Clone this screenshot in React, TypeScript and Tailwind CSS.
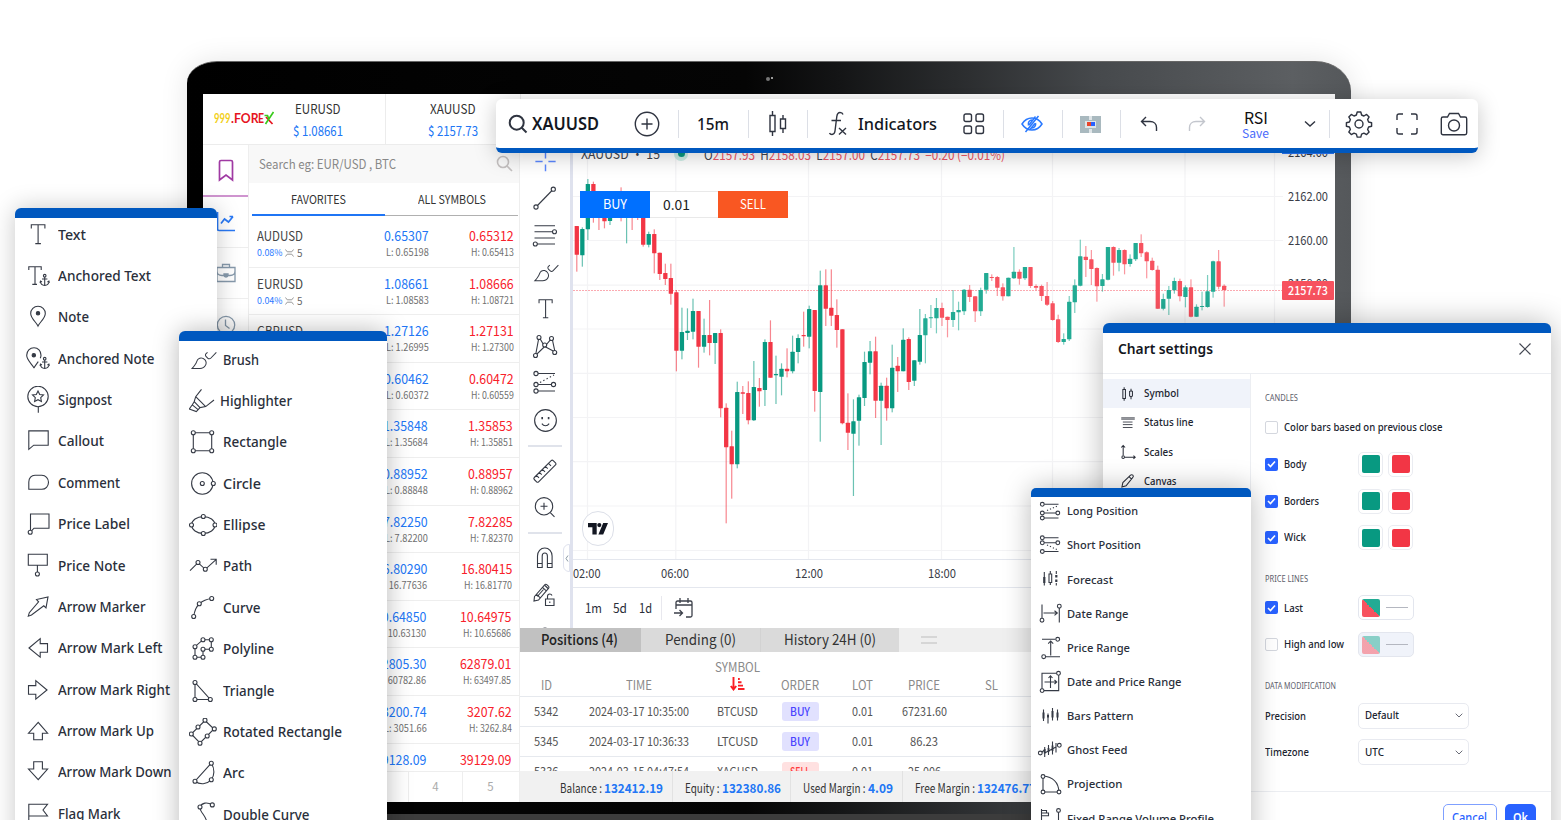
import React, { useLayoutEffect, useRef, useState } from "react";

/* ---------- text that condenses to a given width ---------- */
function Fit({ w, className = "", children }: { w: number; className?: string; children: React.ReactNode }) {
  const ref = useRef<HTMLSpanElement>(null);
  const [scale, setScale] = useState(1);
  useLayoutEffect(() => {
    if (ref.current && ref.current.offsetWidth) {
      const natural = ref.current.getBoundingClientRect().width / scale;
      setScale(w / natural);
    }
  }, [w]);
  return (
    <span className={"inline-flex shrink-0 justify-start leading-none " + className} style={{ width: w }}>
      <span ref={ref} className="inline-block shrink-0 origin-left whitespace-nowrap" style={{ transform: `scaleX(${scale})` }}>
        {children}
      </span>
    </span>
  );
}

/* ---------- icons ---------- */
type Pt = [number, number];
function Dots({ at, r = 2 }: { at: Pt[]; r?: number }) {
  return (
    <>
      {at.map(([x, y], i) => (
        <circle key={i} cx={x} cy={y} r={r} fill="white" />
      ))}
    </>
  );
}

const anchor = (
  <>
    <circle cx="20.7" cy="13.7" r="1.3" />
    <path d="M20.7 15v8.3M18 17h5.4M16.3 19.5c.4 2.6 2 3.8 4.4 3.9 2.400-.1 4-1.300 4.400-3.900M16 20.800l.5-1.700 1.500.8M25.400 20.800l-.5-1.700-1.500.8" />
  </>
);

const longLines = (
  <>
    <path d="M8 7.300H22.500M8 16h13M8 21h14.500" />
    <path d="M11 13.500L22.500 8.500" strokeDasharray="1.200 2" />
    <Dots at={[[6.3, 7.3], [6.3, 16], [21.8, 16], [6.3, 21]]} r={1.9} />
  </>
);

const icons: Record<string, React.ReactNode> = {
  text: <path d="M7.300 7.500V3.800h13.600v3.700M14.100 3.800v18.800M11.300 22.600h5.600" />,
  anchoredText: (
    <>
      <path d="M4.800 8V4.700h12.400V8M11 4.700v17.600M8.300 22.400H13" />
      {anchor}
    </>
  ),
  note: (
    <>
      <path d="M14 23c-1.500-3.600-7.300-7.600-7.300-12.500C6.700 6.300 9.900 3.300 14 3.300s7.300 3 7.300 7.200C21.300 15.400 15.500 19.400 14 23z" />
      <circle cx="14" cy="10.300" r="1.700" fill="currentColor" />
    </>
  ),
  anchoredNote: (
    <>
      <path d="M10 23c-1.500-3.600-7.300-7.600-7.300-12.700C2.700 6 5.900 2.800 10 2.800s7 3.200 7 7.500c0 1-.3 2-.7 3M10 23c.8-1.900 2.700-4.100 4.300-6.400" />
      <circle cx="9.800" cy="10.200" r="1.700" fill="currentColor" />
      {anchor}
    </>
  ),
  signpost: (
    <>
      <circle cx="14" cy="10.500" r="10.200" />
      <path d="M14.300 20.700v6M14 5l1.700 3.500 3.800.5-2.800 2.700.7 3.800L14 13.700l-3.400 1.800.7-3.800L8.500 9l3.800-.5z" />
    </>
  ),
  callout: <path d="M4.800 22.300V3.900h19.400v14.300H9.700z" />,
  comment: <path d="M4.800 20.300V13c0-4 2.600-6.700 6.200-6.700h6.800c3.800 0 6.700 3 6.700 7s-2.900 7-6.700 7z" />,
  priceLabel: (
    <>
      <path d="M6.500 20.500V4H25v14.200H10l-2.500 2.700" />
      <Dots at={[[6.2, 22.300]]} />
    </>
  ),
  priceNote: (
    <>
      <path d="M4.300 2.200h19v11h-19zM13.400 13.200v7" />
      <Dots at={[[13.4, 22]]} />
    </>
  ),
  arrowMarker: <path d="M4.300 23.200l1-3.500L14.600 8.800l-2.100-2.300L24 3.900l-2 11-2.200-2.100L7.500 22z" />,
  arrowLeft: <path d="M5 14L16.200 4.700v4.900h7.300v8.700h-7.300v4.900z" />,
  arrowRight: <path d="M23 14L11.800 4.700v4.900H4.500v8.700h7.300v4.900z" />,
  arrowUp: <path d="M14.200 5.300L4.500 16.200h5.200v6.600h8.700v-6.600h5.200z" />,
  arrowDown: <path d="M14.200 21.700L4.500 11h5.200V3.700h8.700V11h5.200z" />,
  flag: <path d="M4.800 28V4.300h18.700L19 10l4.500 6H4.800" />,
  brush: (
    <g fill="currentColor" stroke="none" fillRule="evenodd">
      <path d="M1.789 23l.859-.854.221-.228c.18-.19.38-.409.597-.655.619-.704 1.238-1.478 1.815-2.298.982-1.396 1.738-2.776 2.177-4.081 1.234-3.667 5.957-4.716 8.923-1.263 3.251 3.785-.037 9.380-5.379 9.380h-9.211zm9.211-1c4.544 0 7.272-4.642 4.621-7.728-2.450-2.853-6.225-2.015-7.216.931-.474 1.408-1.273 2.869-2.307 4.337-.599.852-1.241 1.653-1.882 2.383l-.068.078h6.853z" />
      <path d="M18.182 6.002l-1.419 1.286c-1.031.935-1.075 2.501-.096 3.480l1.877 1.877c.976.976 2.553.954 3.513-.045l5.650-5.874-.721-.693-5.650 5.874c-.574.596-1.507.609-2.086.031l-1.877-1.877c-.574-.574-.548-1.480.061-2.032l1.419-1.286-.672-.741z" />
    </g>
  ),
  highlighter: (
    <path d="M12.500 2.300L6.700 9.700 5.200 14.700 11 20.600l5.700-1L25 13M6.700 9.700l10 9.900M5.200 14.700L3.300 17.800.3 22l7 2.600L11 20.600M3.300 17.800l5.800 4.800" />
  ),
  rectangle: (
    <>
      <path d="M4.300 4.700h18.400v18H4.300z" />
      <Dots at={[[4.3, 4.700], [22.7, 4.700], [4.3, 22.7], [22.7, 22.7]]} />
    </>
  ),
  circle: (
    <>
      <circle cx="13.300" cy="13.500" r="10.700" />
      <Dots at={[[13.3, 13.5], [24.3, 13.5]]} />
    </>
  ),
  ellipse: (
    <>
      <ellipse cx="14.300" cy="14" rx="11.700" ry="8.400" />
      <Dots at={[[14.3, 5.5], [14.3, 22.5], [2.5, 14], [26, 14]]} />
    </>
  ),
  path: (
    <>
      <path d="M1 18.700l8-8 7.300 6.600L27 7.600M21.500 7.300h5.700v5.500" />
      <Dots at={[[9, 10.5], [16.3, 17.3]]} />
    </>
  ),
  curve: (
    <>
      <path d="M4.700 22.500c.8-6 2-9.500 5.600-12.700C14 6.500 18 5 22.700 4.500" />
      <Dots at={[[4.7, 22.5], [10.3, 9.8], [22.7, 4.5]]} />
    </>
  ),
  polyline: (
    <>
      <path d="M6 11.700l8-7h8.300v9.600H14v8H6z" />
      <Dots at={[[6, 11.7], [14, 4.7], [22.3, 4.7], [22.3, 14.3], [14, 14.3], [14, 22.3], [6, 22.3]]} />
    </>
  ),
  triangle: (
    <>
      <path d="M6 5.500v17h15.300z" />
      <Dots at={[[6, 5.5], [6, 22.5], [21.3, 22.5]]} />
    </>
  ),
  rotated: (
    <>
      <path d="M16 2.500l9 8.500L11 25 2.200 16z" />
      <Dots at={[[16, 2.2], [25.3, 10.9], [11, 25.3], [2.3, 16], [9, 9], [18.2, 18]]} />
    </>
  ),
  arc: (
    <>
      <path d="M22.300 4.200L6 22.200c5 3.800 11.500 3.300 16.300-1.400 3.200-4.300 3.700-11 0-16.600z" />
      <Dots at={[[22.3, 4.2], [6, 22.2], [22.3, 20.8]]} />
    </>
  ),
  doubleCurve: (
    <>
      <path d="M23.300 3.700C18 1 13 1.500 11 6c-1 4 6 9 6.500 14 .2 3-1 5-3 7" />
      <Dots at={[[23.3, 3.9], [11, 6]]} />
    </>
  ),
  long: longLines,
  short: (
    <>
      <path d="M8 6.800h14.500M8 11.800h13M8 20.500h14.500" />
      <path d="M11 14l11 5" strokeDasharray="1.200 2" />
      <Dots at={[[6.3, 6.8], [6.3, 11.8], [21.8, 11.8], [6.3, 20.5]]} r={1.9} />
    </>
  ),
  forecast: (
    <>
      <path d="M8.300 7v13.500M14.300 6v3M14.300 17.500V20M20.300 6v3M20.300 18v2.500" />
      <path d="M8.300 12v6" strokeWidth="2.200" />
      <path d="M13 9h2.700v8.500H13z" fill="white" />
      <path d="M20.300 10v2.500M20.300 14.500v2.500" strokeWidth="2.200" />
    </>
  ),
  dateRange: (
    <>
      <path d="M6 5.500v13.500M23.300 9v14.500M7.500 14H21M18.500 11.700L21.300 14l-2.800 2.300" />
      <Dots at={[[6, 21.2], [23.3, 7.2]]} r={1.9} />
    </>
  ),
  priceRange: (
    <>
      <path d="M6 5.300h13.500M9.500 22.700H24M14.700 21.500V7M12.200 9.700L14.700 7l2.500 2.700" />
      <Dots at={[[21.7, 5.3], [7.7, 22.7]]} r={1.900} />
    </>
  ),
  datePrice: (
    <>
      <path d="M6 5.300h16.700v17.300H6zM14.500 20V8M12.500 10l2-2.200 2 2.200M8.500 14h12M18.500 12l2.200 2-2.200 2" />
      <Dots at={[[22.5, 5.3], [6.1, 22.600]]} r={1.900} />
    </>
  ),
  bars: (
    <>
      <path d="M7.500 7.500v11.500M12 11.500v10M16.500 6v12.500M21.500 7.500v11" />
      <path d="M7.500 10.500v6M12 13v2.500M16.500 9v6.500M21.500 10.500v5" strokeWidth="2" />
    </>
  ),
  ghost: (
    <>
      <path d="M5.500 16.500l3-2.500M8.700 11v10M12.500 9v10M16.500 5.500v13M20 7v9.500M8.700 17l11.300-6" />
      <path d="M8.700 13v4.500M12.500 12v4M16.500 9.500v5.500" strokeWidth="1.800" />
      <Dots at={[[4.3, 17], [23.3, 9.300]]} r={1.900} />
    </>
  ),
  projection: (
    <>
      <path d="M7 6v16h16C22.500 12.500 17.500 7 7 6z" />
      <Dots at={[[7, 6.500], [7, 22], [23, 22]]} r={1.900} />
    </>
  ),
  volume: (
    <>
      <path d="M5.500 5v16M5.500 6.500h5v2.500h-5M5.500 9h7v2.800h-7M22.500 8v14" />
      <Dots at={[[22.5, 6.5]]} r={1.900} />
    </>
  ),
  trend: (
    <>
      <path d="M5.500 22.500l16.500-17" />
      <Dots at={[[5, 23], [22.3, 5.200]]} r={2.100} />
    </>
  ),
  fib: (
    <>
      <path d="M3.500 4.800h20.500M3.500 10.700h19M3.500 17h20.500M6 23h18" />
      <Dots at={[[23.5, 10.700], [4.300, 23]]} r={2} />
    </>
  ),
  pattern: (
    <>
      <path d="M4.500 23.500L8 5l5.700 9.500L21 6l3 14-10.300-5.500z" />
      <Dots at={[[4.5, 23.500], [8, 5.500], [13.700, 13], [20.500, 6.500], [23.700, 20.500]]} r={2} />
    </>
  ),
  longTool: (
    <>
      <path d="M6 4.500h18M6 15.500h16M6 22h18" />
      <path d="M9 13.500L23 6" strokeDasharray="1.400 2.300" />
      <Dots at={[[5, 4.500], [5, 15.500], [22.500, 15.500], [5, 22]]} r={2.100} />
    </>
  ),
  smile: (
    <>
      <circle cx="14" cy="14" r="10.500" />
      <path d="M10.800 10.700v2M17 10.700v2" strokeWidth="1.600" />
      <path d="M10.500 17c1.800 2.800 5.200 2.800 7 0" />
    </>
  ),
  ruler: (
    <path d="M3.300 20.500L20.200 3.600c.6-.6 1.400-.6 2 0l2.300 2.300c.6.600.6 1.400 0 2L7.600 24.800c-.6.6-1.400.6-2 0l-2.300-2.300c-.6-.6-.6-1.400 0-2zM17.500 6.400l2.500 2.500M14.500 9.400l2.200 2.200M11.500 12.400l2.500 2.500M8.500 15.400l2.200 2.200M5.500 18.400L8 20.900" />
  ),
  zoomIn: (
    <>
      <circle cx="13" cy="12.300" r="8.700" />
      <path d="M19.300 18.600L23.500 22.800M13 8.800v7M9.500 12.300h7" />
    </>
  ),
  magnet: (
    <path d="M6.500 23.500V12c0-4.500 3-8 7.300-8s7.300 3.500 7.300 8v11.500h-4.700V12c0-1.800-1-3-2.600-3s-2.600 1.200-2.600 3v11.500zM6.500 19.500h4.700M16.400 19.500h4.700" />
  ),
  pencilLock: (
    <>
      <path d="M3.500 15.500L13.700 3.800c.6-.7 1.500-.7 2.100-.1l1.600 1.500c.7.600.7 1.500.1 2.200L7.500 19l-4.500 1zM11.500 6.300l3.800 3.500M5.500 13.300l3.800 3.500M14 4.500l3 3M12.500 8.500l-6.200 7" />
      <path d="M14.500 18h8.500v6.500h-8.500zM16.500 18v-2.500c0-1.500 1-2.500 2.300-2.500 1 0 1.800.5 2.200 1.500M18.800 20.500v1.500" />
    </>
  ),
  lock: <path d="M11 16v-3c0-2 1.200-3 3-3s3 1 3 3v3z" />,
  cross: <path d="M14 4v7M14 17v7M3.500 14H11M17 14h7.500" strokeWidth="1.500" />,
  candles: (
    <path d="M6 7h4v14H6zM8 3.500V7M8 21v3.500M16.500 10l2.200-1 2.200 1v7l-2.200 1.500-2.200-1.500zM18.700 6v3M18.700 18.500V22" />
  ),
  statusLine: <path d="M3.500 6h21M3.500 8h21M6 12.500h15M6 16.500h15M6 21h15" strokeWidth="1.300" />,
  scales: (
    <>
      <path d="M6.500 4v15M3.500 7L6.500 4l3 3M8 22h17M22.500 19.500l2.700 2.500-2.700 2.500" />
      <Dots at={[[6.5, 22]]} r={2} />
    </>
  ),
  pencil: <path d="M4.500 23.500l1.500-7L18 5c1-1 2.500-1 3.500 0s1 2.500 0 3.500L11 21.500zM16 7.500l3.500 3.500" />,
};

function Icon({ name, size = 28, className = "" }: { name: string; size?: number; className?: string }) {
  return (
    <svg
      width={size}
      height={size}
      viewBox="0 0 28 28"
      fill="none"
      stroke="currentColor"
      strokeWidth="1.100"
      className={"shrink-0 " + (className || "text-[#353a45]")}
    >
      {icons[name]}
    </svg>
  );
}

/* ---------- candles: colour, open/close span, high/low span (thirds of a pixel from y=220) ---------- */
const candles: [0 | 1, number, number, number, number][] = [
  [0, 18, 104, 18, 155], [1, 27, 106, 22, 140], [1, -108, 28, -123, 60], [0, -108, -30, -115, 8], [0, -60, -12, -70, 30],
  [0, -40, 4, -50, 25], [1, -30, 3, -40, 15], [0, -50, -30, -60, -20], [0, -60, -30, -98, 4], [1, -60, -30, -70, 70],
  [0, -60, -20, -70, 30], [0, -50, -10, -60, 0], [0, -30, 74, -40, 80], [1, 42, 74, 35, 82], [0, 42, 100, 28, 160],
  [0, 98, 162, 98, 180], [0, 159, 177, 131, 195], [0, 174, 221, 131, 254], [0, 217, 392, 210, 454], [1, 336, 392, 263, 418],
  [1, 332, 339, 265, 360], [1, 273, 335, 236, 358], [0, 273, 380, 273, 443], [1, 345, 380, 296, 398], [0, 345, 369, 240, 406],
  [1, 339, 369, 339, 432], [0, 339, 565, 328, 592], [0, 563, 682, 550, 910], [0, 679, 733, 632, 836], [1, 516, 733, 485, 745],
  [0, 517, 521, 498, 582], [0, 519, 601, 484, 613], [1, 501, 601, 423, 603], [0, 504, 514, 474, 560], [1, 366, 510, 358, 558],
  [0, 366, 473, 301, 473], [1, 462, 466, 407, 552], [1, 446, 470, 430, 526], [0, 446, 454, 385, 472], [1, 395, 454, 347, 460],
  [1, 354, 396, 343, 430], [0, 345, 349, 275, 380], [1, 267, 350, 257, 385], [0, 270, 513, 270, 575], [1, 196, 516, 152, 665],
  [0, 196, 266, 148, 318], [0, 263, 287, 148, 318], [0, 285, 330, 238, 383], [0, 328, 610, 328, 613], [0, 608, 638, 520, 690],
  [1, 604, 641, 538, 828], [1, 532, 602, 524, 677], [1, 426, 534, 395, 558], [1, 394, 428, 363, 463], [0, 394, 542, 350, 594],
  [1, 497, 542, 488, 675], [0, 497, 565, 473, 602], [1, 443, 565, 374, 577], [0, 437, 454, 411, 516], [1, 359, 454, 325, 454],
  [0, 357, 486, 352, 510], [1, 421, 482, 421, 498], [1, 345, 425, 267, 434], [1, 295, 346, 282, 430], [1, 292, 295, 255, 324],
  [1, 264, 295, 234, 340], [0, 264, 293, 248, 318], [0, 290, 300, 290, 352], [1, 276, 300, 210, 321], [1, 270, 277, 245, 331],
  [1, 209, 274, 207, 285], [0, 209, 231, 195, 246], [0, 229, 274, 229, 306], [1, 210, 274, 203, 288], [1, 159, 209, 159, 221],
  [0, 171, 174, 163, 183], [0, 171, 203, 168, 228], [0, 202, 229, 190, 242], [1, 173, 229, 173, 229], [1, 155, 175, 81, 177],
  [0, 155, 176, 148, 194], [1, 141, 175, 141, 180], [0, 141, 198, 141, 204], [0, 198, 203, 193, 211], [0, 198, 228, 194, 243],
  [0, 228, 254, 186, 258], [0, 250, 300, 243, 302], [0, 298, 366, 284, 369], [1, 357, 366, 340, 374], [1, 245, 358, 228, 363],
  [1, 196, 247, 178, 279], [1, 109, 197, 59, 199], [0, 110, 120, 78, 171], [0, 118, 147, 90, 195], [0, 144, 199, 142, 245],
  [1, 178, 198, 162, 215], [1, 81, 179, 81, 181], [0, 81, 128, 79, 167], [1, 90, 128, 84, 154], [0, 90, 133, 88, 163],
  [1, 116, 132, 103, 140], [1, 69, 118, 69, 123], [0, 69, 100, 43, 111], [0, 97, 124, 94, 175], [0, 122, 150, 113, 152],
  [0, 149, 266, 137, 267], [1, 237, 266, 221, 271], [1, 210, 236, 198, 285], [1, 183, 211, 173, 221], [0, 183, 229, 176, 244],
  [1, 202, 231, 196, 262], [0, 202, 290, 178, 292], [1, 260, 290, 253, 291], [1, 258, 261, 215, 271], [1, 214, 261, 165, 263],
  [1, 124, 215, 122, 233], [0, 124, 200, 90, 208], [0, 197, 210, 193, 260],
];

function CandleChart() {
  return (
    <svg width="762" height="414" viewBox="573 145 762 414" className="block shrink-0">
      <g stroke="#f3f3f5" strokeWidth="1.200">
        {[196.5, 240.5, 285.2, 329, 373.3, 417.5, 461.7, 506, 550.5].map((y) => (
          <path key={y} d={`M573 ${y}H1283`} />
        ))}
        {[587.5, 675.8, 808.5, 941.5, 1052.5, 1185, 1274.5].map((x) => (
          <path key={x} d={`M${x} 145V559`} />
        ))}
      </g>
      <path d="M573 290.500H1283" stroke="#f7525f" strokeOpacity=".55" strokeDasharray="2 1" strokeWidth=".9" />
      {candles.map(([up, a, b, h, l], i) => {
        const x = 576.8 + i * 5.533;
        const late = i > 62;
        const c = up ? (late ? "#22ab94" : "#089981") : late ? "#f7525f" : "#f23645";
        return (
          <g key={i}>
            <rect x={x - 0.6} y={220 + h / 3} width={1.2} height={(l - h) / 3} fill={c} fillOpacity=".6" />
            <rect x={x - 2.15} y={220 + a / 3} width={4.3} height={Math.max(1, (b - a) / 3)} rx=".5" fill={c} />
          </g>
        );
      })}
    </svg>
  );
}

/* ---------- floating menus ---------- */
type Item = [string, string, number];
const leftMenu: Item[] = [
  ["text", "Text", 28], ["anchoredText", "Anchored Text", 93], ["note", "Note", 31], ["anchoredNote", "Anchored Note", 96.5],
  ["signpost", "Signpost", 54], ["callout", "Callout", 46], ["comment", "Comment", 62], ["priceLabel", "Price Label", 72],
  ["priceNote", "Price Note", 67.5], ["arrowMarker", "Arrow Marker", 87.5], ["arrowLeft", "Arrow Mark Left", 104.5],
  ["arrowRight", "Arrow Mark Right", 112], ["arrowUp", "Arrow Mark Up", 96], ["arrowDown", "Arrow Mark Down", 113.5], ["flag", "Flag Mark", 62.5],
];
const shapeMenu: Item[] = [
  ["brush", "Brush", 36], ["highlighter", "Highlighter", 72], ["rectangle", "Rectangle", 64], ["circle", "Circle", 38],
  ["ellipse", "Ellipse", 42.5], ["path", "Path", 29], ["curve", "Curve", 37.500], ["polyline", "Polyline", 51], ["triangle", "Triangle", 51.500],
  ["rotated", "Rotated Rectangle", 119], ["arc", "Arc", 21.500], ["doubleCurve", "Double Curve", 86.500],
];
const rangeMenu: Item[] = [
  ["long", "Long Position", 71], ["short", "Short Position", 74], ["forecast", "Forecast", 46], ["dateRange", "Date Range", 61.500],
  ["priceRange", "Price Range", 63], ["datePrice", "Date and Price Range", 114.500], ["bars", "Bars Pattern", 66.500], ["ghost", "Ghost Feed", 60.500],
  ["projection", "Projection", 55.500], ["volume", "Fixed Range Volume Profile", 147],
];

const TREB = "[font-family:'Noto_Sans','Open_Sans',sans-serif]";
const SRC = "[font-family:'Noto_Sans_CJK_SC','Noto_Sans',sans-serif]";

/* ---------- watch list ---------- */
const quotes: [string, string, string, string, string, string][] = [
  ["AUDUSD", "0.08%", "0.65307", "0.65198", "0.65312", "0.65413"],
  ["EURUSD", "0.04%", "1.08661", "1.08583", "1.08666", "1.08721"],
  ["GBPUSD", "", "1.27126", "1.26995", "1.27131", "1.27300"],
  ["", "", "0.60462", "0.60372", "0.60472", "0.60559"],
  ["", "", "1.35848", "1.35684", "1.35853", "1.35851"],
  ["", "", "0.88952", "0.88848", "0.88957", "0.88962"],
  ["", "", "7.82250", "7.82200", "7.82285", "7.82370"],
  ["", "", "16.80290", "16.77636", "16.80415", "16.81770"],
  ["", "", "10.64850", "10.63130", "10.64975", "10.65686"],
  ["", "", "62805.30", "60782.86", "62879.01", "63497.85"],
  ["", "", "3200.74", "3051.66", "3207.62", "3262.84"],
  ["", "", "39128.09", "", "39129.09", ""],
];
const priceW = (s: string) => s.replace(".", "").length * 6.85 + 3.5;
const subW = (s: string) => s.replace(".", "").length * 5.25 + 11.3;

function QuoteRow({ q, inset }: { q: (typeof quotes)[number]; inset: string }) {
  const [name, pct, bid, low, ask, high] = q;
  return (
    <div className={"flex h-[47.600px] shrink-0 border-b border-[#eeeeee] pl-[7.500px] " + inset}>
      <div className="flex w-[80px] flex-col pt-[9px]">
        {name && <Fit w={46} className="h-[15px] text-[13.500px] text-[#444]">{name}</Fit>}
        {pct && (
          <div className="mt-[4px] flex items-center gap-[3px]">
            <Fit w={25.500} className="text-[9.500px] text-[#2979ff]">{pct}</Fit>
            <svg width="9" height="8" viewBox="0 0 9 8" fill="none" stroke="#999"><path d="M.5 .5l1.700 2.300h4.600L8.500 .5M.5 7.500l1.700-2.300h4.600L8.500 7.500" /></svg>
            <Fit w={5.500} className="text-[10px] text-[#666]">5</Fit>
          </div>
        )}
      </div>
      <div className="flex flex-1 flex-col items-end pt-[9px]">
        <Fit w={priceW(bid)} className="h-[15px] text-[13.800px] text-[#2176f5]">{bid}</Fit>
        {low && <Fit w={subW(low)} className="mt-[3px] text-[10.300px] text-[#707070]">L: {low}</Fit>}
      </div>
      <div className="flex w-[85px] flex-col items-end pt-[9px]">
        <Fit w={priceW(ask)} className="h-[15px] text-[13.800px] text-[#f8202a]">{ask}</Fit>
        {high && <Fit w={subW(high)} className="mt-[3px] text-[10.300px] text-[#707070]">H: {high}</Fit>}
      </div>
    </div>
  );
}

function Ticker({ name, price, w }: { name: string; price: string; w: number }) {
  return (
    <div className="flex w-[135px] flex-col items-center border-r border-[#ececec] pt-[8px]">
      <Fit w={45.500} className="text-[13.500px] text-[#333]">{name}</Fit>
      <Fit w={w} className="mt-[8.500px] text-[13px] text-[#2176f5]">{price}</Fit>
    </div>
  );
}

function Watchlist() {
  return (
    <div className="flex w-[271px] shrink-0 flex-col overflow-hidden border-r border-[#eee] bg-white">
      <div className="flex h-[38px] shrink-0 items-center justify-between bg-[#f8f8f8] pb-[2px] pl-[10px] pr-[6px]">
        <Fit w={137} className="text-[13px] text-[#888]">Search eg: EUR/USD , BTC</Fit>
        <svg width="17" height="17" viewBox="0 0 17 17" fill="none" stroke="#c4c0c0" strokeWidth="1.600"><circle cx="7" cy="7" r="5.500" /><path d="M11 11l5 5" /></svg>
      </div>
      <div className="flex h-[33px] shrink-0 pl-[3px] pr-[1px]">
        <div className="flex w-[133px] items-center justify-center border-b-2 border-[#1f75f5] pt-px">
          <Fit w={55} className="text-[12px] text-[#333]">FAVORITES</Fit>
        </div>
        <div className="flex flex-1 items-center justify-center border-b border-[#b0b0b0]">
          <Fit w={68} className="text-[12px] text-[#333]">ALL SYMBOLS</Fit>
        </div>
      </div>
      <div className="flex min-h-0 flex-1 flex-col overflow-hidden pt-[4px]">
        {quotes.map((q, i) => (
          <QuoteRow key={i} q={q} inset={i < 4 ? "pr-[5.500px]" : i < 8 ? "pr-[6.500px]" : "pr-[7.500px]"} />
        ))}
      </div>
      <div className="flex h-[31px] shrink-0 items-center justify-end border-t border-[#eee] pr-[1px] text-[11.500px] leading-none text-[#aaa]">
        <div className="flex h-full w-[54px] items-center justify-center border-l border-[#eee]">4</div>
        <div className="flex h-full w-[56px] items-center justify-center border-l border-[#eee]">5</div>
      </div>
    </div>
  );
}

function SideNav() {
  return (
    <div className="flex w-[46px] shrink-0 flex-col items-center border-r border-[#eee] bg-white">
      <div className="flex h-[52px] w-full shrink-0 items-center justify-center border-b-2 border-[#cf94cf] pt-px">
        <svg width="16" height="23" viewBox="0 0 16 23" fill="none" stroke="#a03aa3" strokeWidth="1.700"><path d="M1.500 21V3c0-1 .6-1.500 1.500-1.500h10c.9 0 1.500.5 1.500 1.500v18L8 16z" /></svg>
      </div>
      <div className="flex h-[51px] w-full shrink-0 items-center justify-center border-b border-[#eee]">
        <svg width="20" height="20" viewBox="0 0 20 20" fill="none" stroke="#2979f5" strokeWidth="1.700"><path d="M1.500 0v17c0 1 .5 1.500 1.500 1.500h16M5 11.500l3.500-4.500 4 3L17 4.500M13.500 4.500h3.500" /></svg>
      </div>
      <div className="flex h-[51px] w-full shrink-0 items-center justify-center border-b border-[#eee]">
        <svg width="20" height="20" viewBox="0 0 20 20" fill="none" stroke="#8699ab" strokeWidth="1.300"><path d="M1 4.500h18v14H1zM6.500 4.500v-3h7v3M1 8c0 3 2 4.500 5 4.500h8c3 0 5-1.500 5-4.500M8 11h4v1.500c0 1-1 1.500-2 1.500s-2-.5-2-1.500z" /></svg>
      </div>
      <div className="flex h-[51px] w-full shrink-0 items-center justify-center">
        <svg width="20" height="20" viewBox="0 0 20 20" fill="none" stroke="#8699ab" strokeWidth="1.300"><circle cx="10" cy="10" r="8.700" /><path d="M9.500 4.500v6l4 3" /></svg>
      </div>
    </div>
  );
}

function DrawTools() {
  const group = (names: string[]) => names.map((n) => (
    <div key={n} className="flex h-[37px] w-full shrink-0 items-center justify-center">
      <Icon name={n} size={n === "text" || n === "brush" || n === "cross" ? 27 : n === "smile" ? 29 : 28} className={n === "cross" ? "text-[#5b88ff]" : ""} />
    </div>
  ));
  return (
    <div className="relative flex w-[53px] shrink-0 flex-col items-center overflow-hidden border-r-[3px] border-[#dfe2ee] bg-white">
      <div className="-mt-[2.500px] flex w-full flex-col">{group(["cross", "trend", "fib", "brush", "text", "pattern", "longTool", "smile"])}</div>
      <div className="mb-[6px] mt-[6px] h-[2px] w-[34px] shrink-0 bg-[#e0e3eb]" />
      {group(["ruler", "zoomIn"])}
      <div className="mb-[6px] mt-[5px] h-[2px] w-[34px] shrink-0 bg-[#e0e3eb]" />
      {group(["magnet", "pencilLock", "lock"])}
      <div className="absolute right-0 top-[399px] flex h-[28px] w-[7px] items-center justify-center rounded-l-md border border-[#dfe2ee] bg-white">
        <svg width="4" height="7" viewBox="0 0 4 7" fill="none" stroke="#8a9aa5"><path d="M3 .5l-2 3 2 3" /></svg>
      </div>
    </div>
  );
}

function Badge({ kind }: { kind: string }) {
  return (
    <span className={"flex h-[19px] w-[37px] items-center justify-center rounded-[3px] font-medium " + (kind === "BUY" ? "bg-[#e1e1fe] text-[#4a45ff]" : "bg-[#ffe1e1] text-[#ff3b3b]")}>
      <Fit w={20} className="text-[12px]">{kind}</Fit>
    </span>
  );
}

const COLS = "grid grid-cols-[53px_132px_64px_62px_62px_62px_72px] place-items-center";
function Positions() {
  const rows = [
    ["5342", "2024-03-17 10:35:00", "BTCUSD", "BUY", "0.01", "67231.60", 45],
    ["5345", "2024-03-17 10:36:33", "LTCUSD", "BUY", "0.01", "86.23", 28],
    ["5336", "2024-03-15 04:47:54", "XAGUSD", "SELL", "0.01", "25.006", 33],
  ] as const;
  return (
    <div className="flex h-[174px] shrink-0 flex-col overflow-hidden bg-white">
      <div className="flex h-[24px] shrink-0 items-center bg-[#efefef] text-[#333]">
        <div className="flex h-full w-[121px] items-center justify-center bg-[#c1c1c1] pb-[1px] pr-[2px] font-medium text-[#222]"><Fit w={77} className="text-[14.500px]">Positions (4)</Fit></div>
        <div className="flex h-full w-[120px] items-center justify-center border-r border-[#d2d2d2] bg-[#dadada] pb-[1px] pr-[1px]"><Fit w={71} className="text-[14.500px]">Pending (0)</Fit></div>
        <div className="flex h-full w-[138px] items-center justify-center bg-[#dadada] pb-[1px]"><Fit w={92} className="text-[14.500px]">History 24H (0)</Fit></div>
        <div className="ml-[22px] h-[8px] w-[16px] border-y-2 border-[#d6d6d6]" />
      </div>
      <div className={COLS + " h-[45px] shrink-0 border-b border-[#e6e9ee] text-[12.500px] text-[#8a8a8a]"}>
        <Fit w={11} className="mt-[22px]">ID</Fit>
        <Fit w={26} className="mt-[22px]">TIME</Fit>
        <div className="flex flex-col items-center gap-[3px] pt-[4px]">
          <Fit w={45}>SYMBOL</Fit>
          <svg width="15" height="14" viewBox="0 0 15 14" fill="none" stroke="#fa1e24" strokeWidth="1.900"><path d="M3.500 0v12M.8 9l2.700 3.500L6.200 9M8 2h1.800M8 5.300h3.500M8 8.600h5M8 12h6.500" /></svg>
        </div>
        <Fit w={38} className="mt-[22px]">ORDER</Fit>
        <Fit w={21} className="mt-[22px]">LOT</Fit>
        <Fit w={32} className="mt-[22px]">PRICE</Fit>
        <Fit w={13} className="mt-[22px]">SL</Fit>
      </div>
      <div className="flex min-h-0 flex-1 flex-col overflow-hidden text-[12px] text-[#555]">
        {rows.map((r) => (
          <div key={r[0]} className={COLS + " h-[30px] shrink-0 border-b border-[#e6e9ee] pb-[1px]"}>
            <Fit w={24.500} className="pb-px">{r[0]}</Fit>
            <Fit w={100} className="pb-px">{r[1]}</Fit>
            <Fit w={41} className="pb-px">{r[2]}</Fit>
            <Badge kind={r[3]} />
            <Fit w={21} className="pb-px">{r[4]}</Fit>
            <Fit w={r[6]} className="pb-px">{r[5]}</Fit>
            <span />
          </div>
        ))}
      </div>
      <div className="flex h-[31px] shrink-0 items-center bg-[#f1f1f1] pl-[40px] text-[12.500px] text-[#333]">
        <Fit w={42} className="pt-[4px]">Balance :</Fit>
        <Fit w={59} className="ml-[2px] pt-[4px] font-bold text-[#2176f5]">132412.19</Fit>
        <div className="ml-[9px] h-full w-px bg-[#e2e2e2]" />
        <Fit w={34.500} className="ml-[12px] pt-[4px]">Equity :</Fit>
        <Fit w={59} className="ml-[2px] pt-[4px] font-bold text-[#2176f5]">132380.86</Fit>
        <div className="ml-[9px] h-full w-px bg-[#e2e2e2]" />
        <Fit w={62.500} className="ml-[12.500px] pt-[4px]">Used Margin :</Fit>
        <Fit w={25} className="ml-[2px] pt-[4px] font-bold text-[#2176f5]">4.09</Fit>
        <div className="ml-[9px] h-full w-px bg-[#e2e2e2]" />
        <Fit w={60} className="ml-[12px] pt-[4px]">Free Margin :</Fit>
        <Fit w={59} className="ml-[2px] pt-[4px] font-bold text-[#2176f5]">132476.77</Fit>
      </div>
    </div>
  );
}

function ChartPane() {
  return (
    <div className="relative flex min-w-0 flex-1 flex-col bg-white">
      <CandleChart />
      <div className="flex h-[29px] shrink-0 items-center border-y border-[#e4e7ee] text-[12.500px] text-[#3a3d47]">
        <Fit w={27.500}>02:00</Fit>
        <Fit w={28} className="ml-[60.500px]">06:00</Fit>
        <Fit w={28} className="ml-[105.500px]">12:00</Fit>
        <Fit w={28} className="ml-[105px]">18:00</Fit>
      </div>
      <div className="flex flex-1 items-center pl-[12px] text-[13px] text-[#2a2e39]">
        <Fit w={17} className="pb-px">1m</Fit>
        <Fit w={14} className="ml-[11px] pb-px">5d</Fit>
        <Fit w={13} className="ml-[12px] pb-px">1d</Fit>
        <div className="ml-[9px] h-[24px] w-px bg-[#e8e8ee]" />
        <svg width="20" height="21" viewBox="0 0 20 21" fill="none" stroke="#3b3f49" strokeWidth="1.300" className="ml-[12px]"><path d="M2 11V4.500C2 3.500 2.600 3 3.500 3h13c.9 0 1.500.5 1.500 1.500v13c0 1-.6 1.500-1.500 1.500H12M2 7h16M6 0v5M14 0v5M0 15h8M5.500 12L8.500 15l-3 3" /></svg>
      </div>

      {/* legend, order ticket and axis labels laid over the plot */}
      <div className="absolute left-[8px] top-[1px] flex items-center text-[13.500px] text-[#42454f]">
        <Fit w={79}>XAUUSD · 15</Fit>
        <span className="ml-[14px] flex h-[14px] w-[14px] items-center justify-center rounded-full bg-[#cdeee6]"><span className="h-[7px] w-[7px] rounded-full bg-[#089981]" /></span>
        <Fit w={301} className="ml-[16px] pt-[2px] text-[13px] text-[#ef5565]">
          <span className="text-[#42454f]">O</span>2157.93&nbsp; <span className="text-[#42454f]">H</span>2158.03&nbsp; <span className="text-[#42454f]">L</span>2157.00&nbsp; <span className="text-[#42454f]">C</span>2157.73&nbsp; −0.20 (−0.01%)
        </Fit>
      </div>
      <div className="absolute left-[7px] top-[46px] flex h-[27px] w-[208px] border border-[#e9e9e9] bg-white">
        <div className="-m-px flex w-[70px] items-center justify-center bg-[#0070ff] pb-[2px] text-white"><Fit w={24} className="text-[13px]">BUY</Fit></div>
        <div className="flex flex-1 items-center pl-[14px] text-[#222]"><Fit w={27} className="text-[13px]">0.01</Fit></div>
        <div className="-m-px flex w-[70px] items-center justify-center bg-[#f95722] pb-[2px] text-white"><Fit w={26} className="text-[13px]">SELL</Fit></div>
      </div>
      <div className="absolute left-[9px] top-[366px] flex h-[35px] w-[32px] items-center justify-center rounded-full border border-[#dcdfe8] bg-white">
        <svg width="20" height="12" viewBox="0 0 20 12" fill="#131722"><path d="M0 0h8.700v11.500H4.400V4.300H0zM20 0l-4.800 11.500h-4.800L15.200 0z" /><circle cx="11.300" cy="2.100" r="2.100" /></svg>
      </div>
      <Fit w={40} className="absolute left-[715px] top-[1px] text-[12.500px] text-[#3a3d47]">2164.00</Fit>
      <div className="absolute left-[709px] top-[7px] h-[2px] w-[52px] bg-[#2979ff]" />
      <Fit w={40} className="absolute left-[715px] top-[45px] text-[12.500px] text-[#3a3d47]">2162.00</Fit>
      <Fit w={40} className="absolute left-[715px] top-[89px] text-[12.500px] text-[#3a3d47]">2160.00</Fit>
      <Fit w={40} className="absolute left-[715px] top-[132px] text-[12.500px] text-[#3a3d47]">2158.00</Fit>
      <div className="absolute left-[709px] top-[136px] flex h-[19px] w-[52px] items-center justify-center rounded-[1px] bg-[#f7525f] font-medium text-white"><Fit w={40} className="pb-px text-[12.500px]">2157.73</Fit></div>
    </div>
  );
}

function Laptop() {
  return (
    <div className={"absolute left-[187px] top-[61px] h-[790px] w-[1164px] rounded-tl-[30px_22px] rounded-tr-[36px_30px] border-t border-[#666] bg-[linear-gradient(90deg,#000_0%,#050505_48%,#141516_56%,#2a2c2e_66%,#46494c_78%,#5c5f62_95%,#55585b_100%)] pl-[16px] pr-[16px] pt-[32px] shadow-[0_0_28px_rgba(0,0,0,0.10)] " + SRC}>
      <div className="absolute left-[579px] top-[15px] flex gap-[1px]"><span className="h-[4px] w-[4px] rounded-full bg-[#777]" /><span className="h-[2px] w-[2px] rounded-full bg-[#ccc]" /></div>
      <div className="flex h-[708px] flex-col bg-white">
        <div className="flex h-[51px] shrink-0 border-b border-[#ececec]">
          <div className="flex w-[48px] items-center justify-start pl-[11px] [font-family:Lato,sans-serif]">
            <div className="flex shrink-0 items-center pt-[1px] text-[12.500px]">
              <Fit w={16.500} className="font-bold text-[#f2d01a]">999</Fit>
              <Fit w={27.500} className="font-bold text-[#e6141f]">.FOR</Fit>
              <Fit w={6} className="font-bold text-[#e6141f]">E</Fit>
              <svg width="10" height="14" viewBox="0 0 10 14" fill="none" strokeWidth="1.700" className="-mt-[3px]"><path d="M2 6l6.500 7" stroke="#e6141f" /><path d="M.5 4.500h3L5 8.500M1.500 13L9.500 1" stroke="#3acb1d" /></svg>
            </div>
          </div>
          <Ticker name="EURUSD" price="$ 1.08661" w={50} />
          <Ticker name="XAUUSD" price="$ 2157.73" w={50} />
        </div>
        <div className="flex min-h-0 flex-1">
          <SideNav />
          <Watchlist />
          <div className="flex min-w-0 flex-1 flex-col">
            <div className="flex min-h-0 flex-1">
              <DrawTools />
              <ChartPane />
            </div>
            <Positions />
          </div>
        </div>
      </div>
      <div className="-mx-[16px] mt-[12px] h-[10px] bg-[#3c3c3c]" />
    </div>
  );
}

function Sep({ className }: { className: string }) {
  return <div className={"h-[28px] w-px shrink-0 bg-[#dcdfe6] " + className} />;
}

function TopBar() {
  const s = { fill: "none", stroke: "#2f3440", strokeWidth: 1.4 };
  return (
    <div className={"absolute left-[496px] top-[99px] flex h-[54px] w-[982px] items-center rounded-[6px] border-b-[5px] border-[#0058bf] bg-white pl-[12px] text-[#131722] shadow-[0_3px_22px_rgba(0,0,0,0.22)] " + TREB}>
      <svg width="20" height="20" viewBox="0 0 20 20" {...s} strokeWidth={2} className="shrink-0"><circle cx="8.700" cy="8.700" r="7" /><path d="M13.500 13.500l5 5" /></svg>
      <Fit w={67} className="ml-[4px] text-[17.500px] font-semibold">XAUUSD</Fit>
      <svg width="26" height="26" viewBox="0 0 26 26" {...s} className="ml-[35px] mt-[1px] shrink-0"><circle cx="13" cy="13" r="11.700" /><path d="M13 7.500v11M7.500 13h11" /></svg>
      <Sep className="ml-[17.500px]" />
      <Fit w={32} className="ml-[18px] text-[17px] font-medium">15m</Fit>
      <Sep className="ml-[19px]" />
      <svg width="20" height="26" viewBox="0 0 20 26" {...s} className="ml-[19.500px] mt-px shrink-0"><path d="M2 4.500h5v16H2zM4.500 0v4.500M4.500 20.500V25M12.500 8h5v9.500h-5zM15 4v4M15 17.500V22" /></svg>
      <Sep className="ml-[18.500px]" />
      <svg width="20" height="26" viewBox="0 0 20 26" {...s} className="ml-[20px] shrink-0"><path d="M15 3.500C14.500 1.800 13.500 1.500 12 1.500c-2 0-2.800 1.500-3.200 4L7 20c-.3 2.300-1 3.500-3 3.500-1.200 0-2-.3-2.500-1.500M3.500 9.500h9.500M11 17l7 6.500M18 17l-7 6.500" /></svg>
      <Fit w={79} className="ml-[10.500px] text-[17px] font-medium">Indicators</Fit>
      <svg width="22" height="22" viewBox="0 0 22 22" {...s} className="ml-[26px] mt-px shrink-0"><rect x="1" y="1" width="7.500" height="7.500" rx="1.800" /><rect x="13" y="1" width="7.500" height="7.500" rx="1.800" /><rect x="1" y="13" width="7.500" height="7.500" rx="1.800" /><rect x="13" y="13" width="7.500" height="7.500" rx="1.800" /></svg>
      <Sep className="ml-[18px]" />
      <svg width="22" height="18" viewBox="0 0 22 18" fill="none" stroke="#2979ff" strokeWidth="1.500" className="ml-[17px] shrink-0"><path d="M1 9c2.500-4 5.800-6 10-6s7.500 2 10 6c-2.500 4-5.800 6-10 6S3.500 13 1 9z" /><path d="M7.500 10.500C6.500 7.500 8.500 5 11 5M14.500 8c.7 2.500-1 5-3.500 5M17.500 1L4.500 17M14.500 1.500L8 10M14 8.500l-5 6" /></svg>
      <Sep className="ml-[18.500px]" />
      <div className="ml-[17.500px] mt-px flex h-[17px] w-[21px] shrink-0 items-center justify-center bg-[#a9b9bf]">
        <span className="flex h-full w-[11px] flex-col items-center justify-between">
          <span className="h-[4px] w-[3px] bg-[#dfe5e8]" />
          <span className="flex h-[7px] w-[11px] items-center justify-center bg-[#dfe5e8]"><span className="h-[4px] w-[4px] bg-[#e8452c]" /><span className="h-[4px] w-[4px] bg-[#2962ff]" /></span>
          <span className="h-[4px] w-[3px] bg-[#dfe5e8]" />
        </span>
      </div>
      <Sep className="ml-[18.500px]" />
      <svg width="18" height="16" viewBox="0 0 18 16" {...s} className="ml-[19px] shrink-0"><path d="M6 1L1.500 5.500 6 10M1.500 5.500H10c4 0 6.500 2.500 6.500 6V15" /></svg>
      <svg width="18" height="16" viewBox="0 0 18 16" fill="none" stroke="#c3c6cd" strokeWidth="1.400" className="ml-[30px] shrink-0"><path d="M12 1l4.500 4.500L12 10M16.500 5.500H8c-4 0-6.500 2.500-6.500 6V15" /></svg>
      <div className={"ml-[35.500px] flex w-[29px] shrink-0 flex-col items-center pt-px " + SRC}>
        <Fit w={24} className="text-[16.500px] text-[#111]">RSI</Fit>
        <Fit w={27} className="mt-[2px] text-[12px] text-[#4a6bfa]">Save</Fit>
      </div>
      <svg width="12" height="8" viewBox="0 0 12 8" {...s} className="ml-[34px] mt-px shrink-0"><path d="M1 1.500l5 4.500 5-4.500" /></svg>
      <Sep className="ml-[13px]" />
      <svg width="28" height="28" viewBox="0 0 28 28" {...s} className="ml-[14.500px] mt-px shrink-0">
        <path d="M12.200 2h3.600l.8 3 2.300 1 2.700-1.600 2.500 2.500-1.500 2.700 1 2.400 3 .8v3.400l-3 .8-1 2.400 1.500 2.700-2.500 2.500-2.700-1.500-2.300 1-.8 3h-3.600l-.8-3-2.400-1-2.700 1.500-2.500-2.500 1.600-2.700-1-2.400-3-.8v-3.400l3-.8 1-2.400L3.800 6.900l2.500-2.500L9 6l2.400-1z" strokeLinejoin="round" />
        <circle cx="14" cy="14" r="4" />
      </svg>
      <svg width="22" height="22" viewBox="0 0 22 22" {...s} className="ml-[23.500px] mt-px shrink-0"><path d="M1 7V3c0-1.300.7-2 2-2h4M15 1h4c1.300 0 2 .7 2 2v4M21 15v4c0 1.300-.7 2-2 2h-4M7 21H3c-1.300 0-2-.7-2-2v-4" /></svg>
      <svg width="28" height="24" viewBox="0 0 28 24" {...s} className="ml-[22px] shrink-0"><path d="M3 5h4.500l2-3.500h9l2 3.500H25c1 0 1.700.7 1.700 1.700V21c0 1-.7 1.700-1.700 1.700H3c-1 0-1.700-.7-1.700-1.700V6.700C1.300 5.700 2 5 3 5z" /><circle cx="14" cy="13.500" r="5.500" /></svg>
    </div>
  );
}

function Check({ on }: { on?: boolean }) {
  return on ? (
    <span className="flex h-[13px] w-[13px] shrink-0 items-center justify-center rounded-[2px] bg-[#2962ff]">
      <svg width="9" height="8" viewBox="0 0 9 8" fill="none" stroke="white" strokeWidth="1.600"><path d="M1 4l2.500 2.500L8 1.500" /></svg>
    </span>
  ) : (
    <span className="h-[13px] w-[13px] shrink-0 rounded-[2px] border border-[#d4d7de] bg-white" />
  );
}

function Swatch({ className }: { className: string }) {
  return (
    <span className="flex h-[25px] w-[25px] shrink-0 items-center justify-center rounded-[5px] border border-[#eaecf1] bg-white">
      <span className={"h-[18px] w-[18px] rounded-[2px] " + className} />
    </span>
  );
}

function LineStyle({ faded }: { faded?: boolean }) {
  return (
    <span className={"flex h-[25px] w-[56px] shrink-0 items-center rounded-[5px] border border-[#e3e6ee] pl-[3px] " + (faded ? "bg-[#f0f3fa]" : "bg-white")}>
      <span className={"h-[18px] w-[18px] rounded-[2px] bg-[linear-gradient(45deg,#f7525f_50%,#22ab94_50%)] " + (faded ? "opacity-50" : "")} />
      <span className="ml-[6px] h-px w-[22px] bg-[#b4b7c0]" />
    </span>
  );
}

function Select({ children, w }: { children: string; w: number }) {
  return (
    <span className="flex h-[26px] w-[111px] shrink-0 items-center justify-between rounded-[5px] border border-[#e8eaf0] bg-white px-[5.500px]">
      <Fit w={w}>{children}</Fit>
      <svg width="8" height="5" viewBox="0 0 8 5" fill="none" stroke="#6a6d78"><path d="M.7.7L4 4 7.300.7" /></svg>
    </span>
  );
}

function Settings() {
  const nav: Item[] = [["candles", "Symbol", 35], ["statusLine", "Status line", 49.500], ["scales", "Scales", 29], ["pencil", "Canvas", 32.500]];
  return (
    <div className={"absolute left-[1103px] top-[323px] flex h-[540px] w-[447.500px] flex-col rounded-t-[6px] border-t-[10px] border-[#0058bf] bg-white text-[10.800px] font-medium text-[#20242f] shadow-[0_0_30px_rgba(0,0,0,0.28)] " + TREB}>
      <div className="flex h-[41px] shrink-0 items-center justify-between border-b border-[#eceef2] pb-[8px] pl-[15px] pr-[20px]">
        <Fit w={95} className="text-[14px] font-semibold text-[#131722]">Chart settings</Fit>
        <svg width="12" height="12" viewBox="0 0 12 12" fill="none" stroke="#444853" strokeWidth="1.200"><path d="M.5.5l11 11M11.500.5l-11 11" /></svg>
      </div>
      <div className="flex h-[418px] shrink-0 border-b border-[#eceef2]">
        <div className="flex w-[148px] shrink-0 flex-col border-r border-[#eceef2] pt-[5px]">
          {nav.map(([ic, label, w], i) => (
            <div key={label} className={"flex h-[29.200px] items-center pl-[16px] " + (i === 0 ? "bg-[#f0f3fa]" : "")}>
              <Icon name={ic} size={18} className="text-[#2a2e39] [stroke-width:1.600]" />
              <Fit w={w} className="ml-[7px]">{label}</Fit>
            </div>
          ))}
        </div>
        <div className="flex flex-1 flex-col pl-[14px]">
          <div className="mt-[16px] flex h-[16px] items-center text-[8px] font-normal text-[#5d606b]"><Fit w={33}>CANDLES</Fit></div>
          <div className="mt-[2px] flex h-[38px] items-center"><Check /><Fit w={158.500} className="ml-[6px]">Color bars based on previous close</Fit></div>
          {([["Body", 22.500], ["Borders", 35], ["Wick", 22]] as [string, number][]).map(([l, w]) => (
            <div key={l} className="flex h-[36.700px] items-center">
              <div className="flex w-[93px] items-center"><Check on /><Fit w={w} className="ml-[6px]">{l}</Fit></div>
              <Swatch className="bg-[#089981]" />
              <span className="w-[5px]" />
              <Swatch className="bg-[#f23645]" />
            </div>
          ))}
          <div className="mt-[14px] flex h-[17px] items-center text-[8px] font-normal text-[#5d606b]"><Fit w={43}>PRICE LINES</Fit></div>
          <div className="mt-[2.500px] flex h-[36.700px] items-center"><div className="flex w-[93px] items-center"><Check on /><Fit w={19} className="ml-[6px]">Last</Fit></div><LineStyle /></div>
          <div className="flex h-[36.700px] items-center"><div className="flex w-[93px] items-center"><Check /><Fit w={60} className="ml-[6px]">High and low</Fit></div><LineStyle faded /></div>
          <div className="mt-[14.500px] flex h-[17px] items-center text-[8px] font-normal text-[#5d606b]"><Fit w={71}>DATA MODIFICATION</Fit></div>
          <div className="mt-[3px] flex h-[36.700px] items-center"><div className="w-[93px]"><Fit w={41}>Precision</Fit></div><Select w={34}>Default</Select></div>
          <div className="flex h-[36.700px] items-center"><div className="w-[93px]"><Fit w={44}>Timezone</Fit></div><Select w={19}>UTC</Select></div>
        </div>
      </div>
      <div className="flex items-start justify-end gap-[8px] pr-[15px] pt-[12px] text-[12px]">
        <div className="flex h-[27px] w-[54px] items-center justify-center rounded-[5px] border border-[#7fa0ff] text-[#2962ff]"><Fit w={35}>Cancel</Fit></div>
        <div className="flex h-[27px] w-[31px] items-center justify-center rounded-[5px] bg-[#2962ff] font-semibold text-white"><Fit w={15}>Ok</Fit></div>
      </div>
    </div>
  );
}

export default function App() {
  return (
    <div className="relative h-[820px] w-[1561px] overflow-hidden bg-white">
      <Laptop />
      <TopBar />

      <div className={"absolute left-[15px] top-[207.500px] flex h-[660px] w-[202px] flex-col rounded-t-[6px] border-t-[10px] border-[#0058bf] bg-white text-[14px] font-medium text-[#2a2f3b] shadow-[0_0_24px_rgba(0,0,0,0.22)] " + TREB}>
        <div className="-mt-[3.500px] flex flex-col">
          {leftMenu.map(([ic, label, w]) => (
            <div key={label} className="flex h-[41.360px] items-center pl-[9px]">
              <Icon name={ic} />
              <Fit w={w} className="ml-[6px]">{label}</Fit>
            </div>
          ))}
        </div>
      </div>

      <div className={"absolute left-[179px] top-[331px] flex h-[540px] w-[208px] flex-col rounded-t-[6px] border-t-[10px] border-[#0058bf] bg-white text-[14px] font-medium text-[#2a2f3b] shadow-[0_0_26px_rgba(0,0,0,0.28)] " + TREB}>
        <div className="-mt-[2px] flex flex-col">
          {shapeMenu.map(([ic, label, w]) => (
            <div key={label} className="flex h-[41.360px] items-center pl-[10px]">
              <Icon name={ic} />
              <Fit w={w} className={label === "Highlighter" ? "ml-[3px]" : "ml-[6px]"}>{label}</Fit>
            </div>
          ))}
        </div>
      </div>

      <Settings />

      <div className={"absolute left-[1031px] top-[488px] flex h-[380px] w-[219.500px] flex-col rounded-t-[5px] border-t-[9px] border-[#0058bf] bg-white text-[11.500px] font-medium text-[#2a2f3b] shadow-[0_0_28px_rgba(0,0,0,0.28)] " + TREB}>
        <div className="-mt-[3px] flex flex-col">
          {rangeMenu.map(([ic, label, w]) => (
            <div key={label} className="flex h-[34.150px] items-center pl-[5px]">
              <Icon name={ic} />
              <Fit w={w} className="ml-[3px]">{label}</Fit>
            </div>
          ))}
        </div>
      </div>
    </div>
  );
}
